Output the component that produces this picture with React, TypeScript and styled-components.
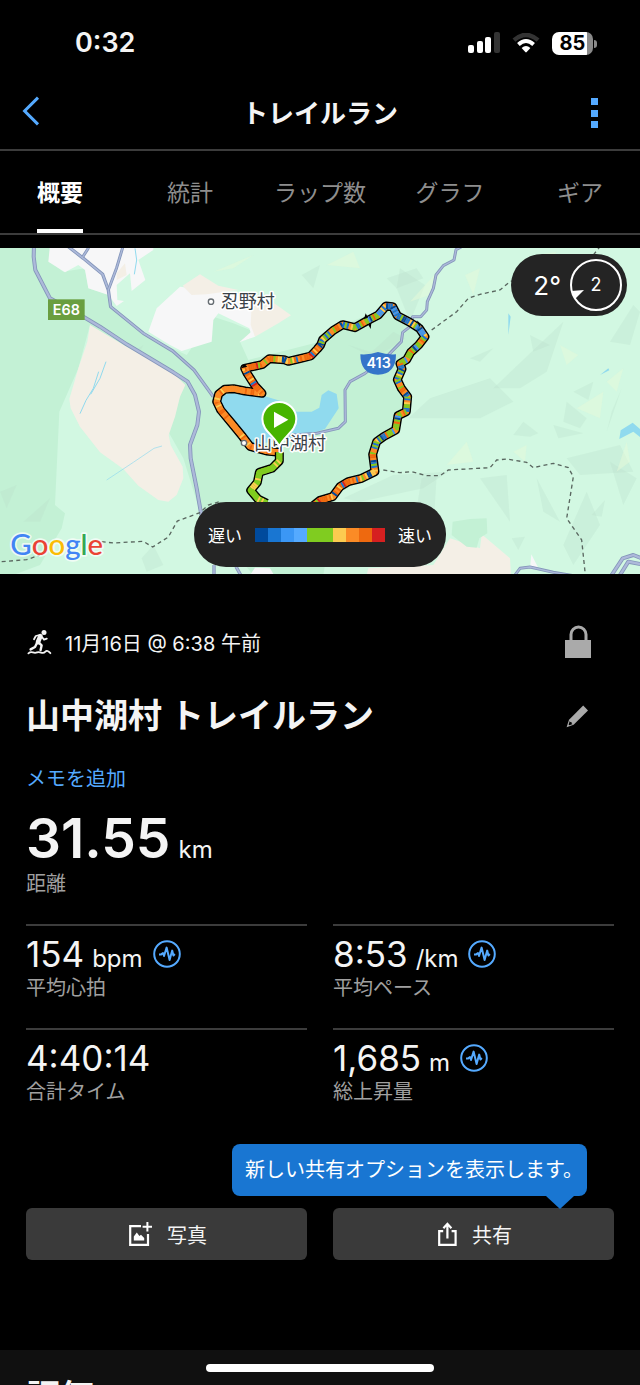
import React from "react";
import styled, { createGlobalStyle } from "styled-components";

const GlobalStyle = createGlobalStyle`
  *, *::before, *::after { box-sizing: border-box; }
  body {
    margin: 0;
    background: #000;
    color: #f4f4f4;
    font-family: Inter, "Noto Sans CJK JP", sans-serif;
  }
  h1, h2, p, dl, dd, dt { margin: 0; }
  button { border: 0; padding: 0; background: none; color: inherit; font: inherit; cursor: pointer; }
  svg { display: block; }
`;

const blue = "#55aaff";
const muted = "#a0a0a0";
const line = "#3c3c3c";

const Screen = styled.div`
  position: relative;
  display: flex;
  flex-direction: column;
  height: 100vh;
  overflow: hidden;
  background: #000;
`;

const StatusBar = styled.div`
  display: flex;
  flex: none;
  align-items: center;
  justify-content: space-between;
  height: 76px;
  padding: 10px 47px 0 75px;
`;

const Clock = styled.time`
  font-size: 27px;
  font-weight: 600;
  line-height: 32px;
`;

const StatusIcons = styled.div`
  display: flex;
  align-items: center;
  gap: 12px;
`;

const Battery = styled.div`
  position: relative;
  width: 41px;
  height: 23px;
  border-radius: 7px;
  background: linear-gradient(90deg, #fff 85%, #8a8a8a 85%);
  color: #000;
  font-size: 20px;
  font-weight: 700;
  line-height: 23px;
  text-align: center;

  &::after {
    content: "";
    position: absolute;
    top: 8px;
    right: -4px;
    width: 3px;
    height: 8px;
    border-radius: 0 3px 3px 0;
    background: #8a8a8a;
  }
`;

const NavBar = styled.header`
  display: grid;
  flex: none;
  grid-template-columns: 60px 1fr 60px;
  align-items: center;
  height: 75px;
  border-bottom: 2px solid ${line};
`;

const NavTitle = styled.h1`
  padding-top: 2px;
  font-size: 26px;
  font-weight: 700;
  line-height: 36px;
  text-align: center;
`;

const NavButton = styled.button<{ $end?: boolean }>`
  display: flex;
  justify-content: ${(p) => (p.$end ? "flex-end" : "flex-start")};
  padding: ${(p) => (p.$end ? "2px 42px 0 0" : "0 0 4px 22px")};
`;

const TabRow = styled.div`
  flex: none;
  overflow: hidden;
`;

const Tabs = styled.nav`
  display: grid;
  grid-template-columns: repeat(5, 1fr);
  height: 84px;
  margin: 0 -5px;
  border-bottom: 2px solid ${line};
`;

const Tab = styled.button<{ $active?: boolean }>`
  justify-self: center;
  height: 82px;
  padding-top: 5px;
  border-bottom: 4px solid ${(p) => (p.$active ? "#fff" : "transparent")};
  color: ${(p) => (p.$active ? "#fff" : "#8e8e8e")};
  font-size: 23px;
  font-weight: ${(p) => (p.$active ? 700 : 400)};
  line-height: 32px;
  white-space: nowrap;
`;

const MapPanel = styled.section`
  position: relative;
  flex: none;
  height: 326px;
  margin-top: 13px;
  background: #d2f8e2;
`;

const MapSvg = styled.svg`
  width: 100%;
  height: 100%;
`;

const Overlay = styled.div`
  position: absolute;
  display: flex;
  align-items: center;
  background: #242424;
  color: #fff;
`;

const Weather = styled(Overlay)`
  top: 6px;
  right: 13px;
  gap: 9px;
  height: 62px;
  padding: 0 5px 0 22px;
  border-radius: 31px;
  font-size: 26px;
`;

const Legend = styled(Overlay)`
  bottom: 7px;
  left: 50%;
  justify-content: center;
  gap: 13px;
  width: 252px;
  height: 65px;
  border-radius: 32px;
  font-size: 17px;
  transform: translateX(-50%);
`;

const Scale = styled.div`
  display: grid;
  grid-template-columns: repeat(10, 13px);
  height: 14px;
`;

const Swatch = styled.span<{ $color: string }>`
  background: ${(p) => p.$color};
`;

const Summary = styled.main`
  flex: none;
  padding: 49px 26px 90px;
`;

const Row = styled.div`
  display: flex;
  align-items: center;
  justify-content: space-between;
`;

const DateRow = styled(Row)`
  height: 38px;
  padding-right: 22px;
  font-size: 20px;
`;

const DateText = styled.div`
  display: flex;
  align-items: center;
  gap: 13px;
`;

const TitleRow = styled(Row)`
  height: 50px;
  margin-top: 30px;
  padding-right: 25px;
`;

const Title = styled.h2`
  font-size: 34px;
  font-weight: 700;
  line-height: 50px;
`;

const MemoButton = styled.button`
  display: block;
  margin-top: 23px;
  color: ${blue};
  font-size: 20px;
  line-height: 30px;
`;

const Metric = styled.dl`
  display: flex;
  flex-direction: column-reverse;
`;

const Distance = styled(Metric)`
  margin-top: 12px;
`;

const Label = styled.dt`
  color: ${muted};
  font-size: 20px;
  line-height: 28px;
`;

const Value = styled.dd<{ $large?: boolean }>`
  display: flex;
  align-items: baseline;
  gap: 8px;
  height: ${(p) => (p.$large ? 64 : 40)}px;
  font-size: ${(p) => (p.$large ? 55 : 35)}px;
  font-weight: ${(p) => (p.$large ? 600 : 400)};
  line-height: ${(p) => (p.$large ? 64 : 40)}px;

  svg { align-self: center; margin-left: 2px; }
`;

const Unit = styled.span`
  font-size: 24px;
  font-weight: 400;
  line-height: 24px;
`;

const MetricGrid = styled.div`
  display: grid;
  grid-template-columns: 1fr 1fr;
  gap: 0 26px;
  margin-top: 26px;

  ${Metric} {
    height: 104px;
    justify-content: flex-end;
    padding-top: 8px;
    border-top: 2px solid ${line};
  }
`;

const Actions = styled.div`
  position: relative;
  display: grid;
  grid-template-columns: 1fr 1fr;
  gap: 26px;
  margin-top: 76px;
`;

const ActionButton = styled.button`
  display: flex;
  align-items: center;
  justify-content: center;
  gap: 15px;
  height: 52px;
  padding-left: 3px;
  border-radius: 6px;
  background: #3a3a3a;
  font-size: 20px;
`;

const Tooltip = styled.div`
  position: absolute;
  right: 27px;
  bottom: 64px;
  padding: 0 4px 0 13px;
  border-radius: 8px;
  background: #1976d2;
  color: #fff;
  font-size: 20px;
  line-height: 52px;
  white-space: nowrap;

  &::after {
    content: "";
    position: absolute;
    top: 100%;
    right: 13px;
    border: 14px solid transparent;
    border-top: 13px solid #1976d2;
    border-bottom: 0;
  }
`;

const NextSection = styled.section`
  flex: 1 0 auto;
  padding: 22px 26px 0;
  background: #101010;
`;

const HomeIndicator = styled.div`
  position: absolute;
  bottom: 13px;
  left: 50%;
  width: 228px;
  height: 8px;
  border-radius: 4px;
  background: #fff;
  transform: translateX(-50%);
`;

const scaleColors = [
  "#004a9c", "#1976d2", "#3b97f5", "#55aaff", "#80cc20",
  "#80cc20", "#fccb50", "#fb8b26", "#ee690f", "#d62020",
];

type Point = [number, number];

const loop: Point[] = [
  [838, 622], [800, 618], [750, 604], [728, 575], [696, 536], [662, 495], [650, 470], [656, 447],
  [674, 433], [700, 431], [735, 438], [786, 445], [765, 422], [742, 386], [734, 370], [786, 359],
  [808, 341], [852, 344], [865, 349], [900, 341], [932, 333], [952, 312], [962, 300], [968, 284], [1000, 256],
  [1028, 239], [1065, 248], [1100, 228], [1135, 210], [1158, 183], [1178, 185], [1192, 212],
  [1228, 231], [1258, 250], [1275, 275], [1256, 300], [1232, 322], [1220, 344], [1200, 356],
  [1206, 372], [1192, 404], [1204, 430], [1223, 455], [1219, 500], [1194, 512], [1187, 555],
  [1152, 574], [1130, 590], [1118, 628], [1125, 680], [1085, 700], [1045, 710], [1020, 725],
  [998, 755], [960, 766], [930, 790],
];
const spur: Point[] = [
  [838, 622], [838, 648], [816, 670], [778, 682], [772, 712], [752, 736], [774, 762], [800, 775],
];

const palettes = {
  orange: ["#fb8b26", "#fb8b26", "#fb8b26", "#ee690f", "#fb8b26", "#fccb50", "#fb8b26"],
  mixed: ["#1976d2", "#fccb50", "#80cc20", "#fb8b26", "#004a9c", "#80cc20", "#3b97f5", "#ee690f", "#80cc20", "#fb8b26", "#1976d2"],
  cool: ["#004a9c", "#1976d2", "#80cc20", "#1976d2", "#fccb50", "#004a9c", "#3b97f5"],
  warm: ["#ee690f", "#fb8b26", "#ee690f", "#80cc20", "#fb8b26", "#fccb50", "#1976d2", "#fb8b26", "#ee690f", "#d62020", "#004a9c"],
  green: ["#80cc20", "#80cc20", "#80cc20", "#80cc20", "#80cc20", "#80cc20", "#fccb50"],
};

function paletteFor(index: number) {
  if (index < 11) return palettes.orange;
  if (index < 22) return palettes.warm;
  if (index > 27 && index < 34) return palettes.cool;
  if (index > 48) return palettes.warm;
  return palettes.mixed;
}

const toPath = (points: Point[]) => "M" + points.map((p) => p.join(" ")).join("L");

function Track({ points, green }: { points: Point[]; green?: boolean }) {
  const pieces: React.ReactNode[] = [];
  let n = 0;
  for (let i = 0; i < points.length - 1; i++) {
    const [x1, y1] = points[i];
    const [x2, y2] = points[i + 1];
    const count = Math.max(1, Math.round(Math.hypot(x2 - x1, y2 - y1) / 6));
    const palette = green ? palettes.green : paletteFor(i);
    for (let k = 0; k < count; k++) {
      const color = palette[(n * n * 3 + n * 5 + (n >> 2)) % palette.length];
      pieces.push(
        <line
          key={n}
          x1={x1 + ((x2 - x1) * k) / count}
          y1={y1 + ((y2 - y1) * k) / count}
          x2={x1 + ((x2 - x1) * (k + 1)) / count}
          y2={y1 + ((y2 - y1) * (k + 1)) / count}
          stroke={color}
          strokeWidth={18}
        />
      );
      n++;
    }
  }
  return (
    <g fill="none" strokeLinejoin="round">
      <path d={toPath(points)} stroke="#000" strokeWidth={27} />
      <path d={toPath(points)} stroke={green ? "#80cc20" : "#fb8b26"} strokeWidth={18} />
      {pieces}
    </g>
  );
}

const roads = [
  { w: 12, d: "M102 0L101 35L106 75L150 160L250 215L300 245L380 298L470 352L520 382L563 410L585 450L597 500L592 540L570 600L572 640L590 730L604 810" },
  { w: 10, d: "M205 5L250 40L308 88L325 135L332 185L430 265L518 318L582 375L640 455" },
  { w: 9, d: "M266 8L248 36M368 8L350 68L325 135" },
  { w: 9, d: "M1385 5L1368 14L1362 45L1330 62L1308 90L1300 130L1282 170L1280 195L1262 215L1238 215L1230 245L1208 262L1204 290L1160 335L1095 385L1050 410L1035 435L1036 530L1015 550L950 565L850 572" },
  { w: 9, d: "M1545 990L1560 970L1590 966L1660 982L1720 992" },
  { w: 12, d: "M1835 990L1868 940L1900 930L1925 940M1860 990L1885 950L1925 958" },
  { w: 10, d: "M642 960V990M708 965L722 990" },
];

const shade = [
  "1105 330L1180 260L1215 280L1140 330L1045 300", "1230 230L1275 120L1200 70L1190 130",
  "1290 460L1470 400L1540 470L1440 520L1225 520", "1480 430L1690 230L1640 380L1560 430",
  "1540 570L1570 530L1615 565L1590 575", "1660 540L1750 565L1675 580",
  "1720 440L1780 410L1765 465", "1700 470L1760 520L1740 550L1690 530",
  "1820 560L1865 430L1835 500", "1830 290L1900 180L1920 200L1890 300",
  "1180 690L1345 680L1270 730L1080 770L1030 760", "1440 700L1520 690L1530 830",
  "1610 700L1680 830L1630 800", "1700 640L1860 600L1900 680L1740 690",
  "1775 810L1815 765L1805 815", "1690 900L1760 740L1800 840L1720 960",
  "1830 650L1910 700L1870 780", "1535 880L1575 875L1555 915",
  "1410 340L1480 310L1440 350", "1160 100L1250 70L1270 100L1190 130",
  "905 90L960 60L940 130", "350 350L430 300L400 360", "425 940L460 900L490 960L440 980",
  "0 740L50 720L20 790", "70 830L150 760L120 830", "1265 700L1310 690L1300 850L1250 790",
  "1590 270L1650 300L1600 320", "1680 110L1780 70L1745 150",
];
const glow = [
  "1395 90L1440 70L1420 150", "1680 300L1735 330L1700 360", "1820 410L1870 370L1850 440",
  "1340 660L1400 590L1420 650", "1540 620L1580 600L1575 650", "1230 170L1330 60L1290 150",
  "1730 490L1810 440L1800 520", "1850 680L1880 590L1890 650", "1610 30L1670 20L1640 60",
  "980 60L1060 20L1080 70", "640 80L760 30L700 70",
];

function TrailMap() {
  return (
    <MapSvg viewBox="0 9 1920 978" preserveAspectRatio="xMidYMid slice" role="img" aria-label="ルートの地図">
      <rect x="-960" width="3840" height="990" fill="#d2f8e2" />
      <path
        fill="#c3f1d5"
        d="M0 0H150V50L190 80L255 70L265 130L330 150L335 190L430 270L560 330L640 215L700 235L750 255L752 280L720 290L745 345L960 290L1030 240L1165 185L1275 275L1200 370L1215 450L1185 555L1125 590L1120 680L1010 750L970 990H760L600 800L550 640L505 560L550 420L270 240L235 370L178 500L165 780L195 805L185 850L120 960L40 990H0Z"
      />
      <g fill="#b9dfc9" fillOpacity="0.3">{shade.map((d) => <path key={d} d={`M${d}Z`} />)}</g>
      <g fill="#e6f9da" fillOpacity="0.5">{glow.map((d) => <path key={d} d={`M${d}Z`} />)}</g>
      <g fill="#f7f7f8">
        <path d="M150 0H460V15L415 45L436 105L395 138L390 85L350 120L352 165L372 168L350 183L325 150L265 130L255 75L235 60L195 82L145 50Z" />
        <path d="M445 260L470 190L540 125L620 135L750 150L765 275L718 292L752 262L748 250L655 205L640 225L635 290L545 318L510 300Z" />
        <path d="M750 990L765 968L810 970L822 990ZM1590 970L1594 928L1618 975Z" />
      </g>
      <g fill="#f4efe6">
        <path d="M270 240L380 305L470 355L520 385L556 420L540 455L525 515L506 570L512 600L548 665L550 700L530 750L505 770L475 765L415 722L370 672L300 622L240 545L212 490L208 462L235 370L262 290Z" />
        <path d="M548 122L600 88L655 122L715 135L620 148L575 150Z" />
        <path d="M755 180L800 160L830 180L873 211L835 235L800 255L765 275L752 240Z" />
        <path d="M1100 990L1105 970L1300 960L1350 880L1440 910L1445 868L1530 940L1533 990ZM350 85L375 55L380 90L350 105Z" />
      </g>
      <path fill="#c3f1d5" d="M1355 870L1358 830L1410 822L1460 820L1462 865L1438 880L1430 908L1400 905Z" />
      <g fill="#90daee">
        <path d="M650 490L670 450L720 438L790 452L850 470L890 500L935 500L958 488L965 450L985 436L1010 447L1016 490L975 552L900 576L830 590L745 598L715 560Z" />
        <path d="M1858 582L1862 556L1898 533L1925 556V580L1900 560Z" />
        <path d="M1800 390L1825 370L1828 376ZM1525 205L1532 215L1525 270Z" />
      </g>
      <g fill="none" stroke="#90daee" strokeWidth="3">
        <path d="M240 506L258 466L280 430L296 380M272 448L300 400L318 350M405 10L410 45L403 88" />
        <path d="M320 705L400 652L462 610L486 603" strokeWidth="2" />
      </g>
      {roads.map((r) => (
        <g key={r.d} fill="none" strokeLinejoin="round">
          <path d={r.d} stroke="#8496ba" strokeWidth={r.w} />
          <path d={r.d} stroke="#adb9da" strokeWidth={r.w - 5} />
        </g>
      ))}
      <g fill="none" stroke="#59665f" strokeWidth="4" strokeDasharray="12 10">
        <path d="M5 950L80 944L120 930M305 890L340 894L430 889L458 906L505 876L532 828L600 803L625 780L665 768" />
        <path d="M1295 255L1370 200L1405 160L1440 148L1500 135L1530 110L1560 100L1600 70L1780 30L1800 5" />
        <path d="M1150 675L1200 683L1235 680L1280 692L1320 692L1345 675L1470 668L1490 645L1520 642L1580 652L1600 668L1660 655L1705 668L1720 695L1700 820L1745 885L1755 980" />
      </g>

      <Track points={loop} />
      <path d="M724 370L732 356L742 365ZM1092 222L1097 205L1104 218ZM1104 238L1112 252L1114 234ZM1250 226L1262 236L1258 245Z" />
      <Track points={spur} green />

      <path fill="#3474c9" d="M1081 328Q1110 330 1134 321Q1160 330 1188 328Q1188 388 1134 389Q1081 388 1081 328Z" />
      <g fontFamily='Inter, "Noto Sans CJK JP", sans-serif' fontWeight="600" fill="#fff" textAnchor="middle">
        <text x="1136" y="368" fontSize="43">413</text>
        <rect x="144" y="163" width="110" height="62" fill="#6a9e40" />
        <text x="199" y="210" fontSize="43">E68</text>
      </g>
      <g
        fontFamily='"Noto Sans CJK JP", sans-serif'
        fontSize="54"
        fill="#3b4248"
        stroke="#fff"
        strokeWidth="9"
        strokeLinejoin="round"
        paintOrder="stroke"
      >
        <text x="662" y="190">忍野村</text>
        <text x="762" y="616">山中湖村</text>
      </g>
      <g fill="#fff" stroke="#666d72" strokeWidth="4">
        <circle cx="633" cy="170" r="8" />
        <circle cx="732" cy="594" r="8" />
      </g>
      <path fill="#47b400" stroke="#fff" strokeWidth="6" d="M838 604C822 570 787 558 787 522A51 51 0 0 1 889 522C889 558 854 570 838 604Z" />
      <path fill="#fff" d="M822 500L865 524L822 549Z" />
      <text
        x="31" y="930" fontFamily="Lato, sans-serif" fontSize="88" fontWeight="500"
        stroke="#fff" strokeOpacity="0.7" strokeWidth="10" strokeLinejoin="round" paintOrder="stroke"
      >
        <tspan fill="#4285f4">G</tspan><tspan fill="#ea4335">o</tspan><tspan fill="#fbbc05">o</tspan>
        <tspan fill="#4285f4">g</tspan><tspan fill="#34a853">l</tspan><tspan fill="#ea4335">e</tspan>
      </text>
    </MapSvg>
  );
}

function SignalIcon() {
  return (
    <svg width="32" height="22" viewBox="0 0 32 22" fill="#fff" aria-hidden="true">
      <rect y="13" width="6" height="8" rx="2" />
      <rect x="9" y="9" width="6" height="12" rx="2" />
      <rect x="17" y="5" width="6" height="16" rx="2" />
      <rect x="26" width="6" height="21" rx="2" fill="#333" />
    </svg>
  );
}

function WifiIcon() {
  return (
    <svg width="28" height="20" viewBox="0 0 28 20" aria-hidden="true">
      <path d="M2 7.2Q14 -3.4 26 7.2" fill="none" stroke="#333" strokeWidth="4.4" />
      <path d="M6.4 11.4Q14 4.6 21.6 11.4" fill="none" stroke="#fff" strokeWidth="4" />
      <path d="M9.6 15Q14 11.2 18.4 15L14.7 19.1Q14 19.8 13.3 19.1Z" fill="#fff" />
    </svg>
  );
}

function RunnerIcon() {
  return (
    <svg width="26" height="26" viewBox="0 0 26 26" fill="none" stroke="#f4f4f4" strokeLinecap="round" strokeLinejoin="round" aria-hidden="true">
      <circle cx="18" cy="3.4" r="2.5" fill="#f4f4f4" stroke="none" />
      <path d="M14.4 7.2L12 13" strokeWidth="4.6" />
      <path d="M13.4 6L9.8 7L8 10.2M16 8L18 10.6L20.8 9.6" strokeWidth="1.8" />
      <path d="M12.6 13.4L15.6 16.4L14.6 21M11.2 13.4L9 18L4.6 20.4" strokeWidth="2.4" />
      <path d="M2.4 24.4Q4.4 22.6 6.8 23.4T11 23.4T15.2 23.6T19.4 22.6T24.4 24.2" strokeWidth="1.8" />
    </svg>
  );
}

function LockIcon() {
  return (
    <svg width="27" height="34" viewBox="0 0 27 34" aria-hidden="true">
      <path d="M6 16V9.5a7.5 7.5 0 0 1 15 0V16" fill="none" stroke="#aaa" strokeWidth="3" />
      <path d="M0 15H26V33H0Z" fill="#aaa" />
    </svg>
  );
}

function PencilIcon() {
  return (
    <svg width="23" height="23" viewBox="0 0 23 23" aria-hidden="true">
      <path d="M17.2 0.6L22 5.4L7.6 19.8L0.6 22.2L3 14.8Z" fill="#aaa" />
      <path d="M3.8 15.9L2.6 19.4L3.4 20.2L6.8 19L5.8 18.8L5.6 17.2L4.2 17Z" fill="#000" />
    </svg>
  );
}

function PulseIcon() {
  return (
    <svg width="28" height="28" viewBox="0 0 28 28" fill="none" stroke={blue} aria-hidden="true">
      <circle cx="14" cy="14" r="12.8" strokeWidth="2" />
      <path d="M6 14.4H8.2L10 13L11 16L13.6 7.6L16.6 20L19.2 10.6L20.4 15.6L21.8 14" strokeWidth="2" strokeLinejoin="round" />
    </svg>
  );
}

function PhotoIcon() {
  return (
    <svg width="23" height="24" viewBox="0 0 23 24" aria-hidden="true">
      <path d="M12 4.2H1.2V22.8H19V12" fill="none" stroke="#fff" strokeWidth="2.2" />
      <path d="M18.4 0V9.6M13.6 4.8H23" stroke="#fff" strokeWidth="2" />
      <path d="M4.8 18.6V14.6L7.8 10.4L10.4 14L12 12.8L15.2 16V18.6Z" fill="#fff" />
    </svg>
  );
}

function ShareIcon() {
  return (
    <svg width="19" height="24" viewBox="0 0 19 24" fill="none" stroke="#fff" strokeWidth="2.2" aria-hidden="true">
      <path d="M5.2 9.2H1.2V22.8H17.6V9.2H13.6" />
      <path d="M9.4 16.6V2M5.4 6.2L9.4 1.8L13.4 6.2" />
    </svg>
  );
}

const tabs = ["概要", "統計", "ラップ数", "グラフ", "ギア"];

const metrics = [
  { value: "154", unit: "bpm", label: "平均心拍", chart: true },
  { value: "8:53", unit: "/km", label: "平均ペース", chart: true },
  { value: "4:40:14", unit: "", label: "合計タイム", chart: false },
  { value: "1,685", unit: "m", label: "総上昇量", chart: true },
];

export default function App() {
  return (
    <>
      <GlobalStyle />
      <Screen>
        <StatusBar>
          <Clock>0:32</Clock>
          <StatusIcons>
            <SignalIcon />
            <WifiIcon />
            <Battery>85</Battery>
          </StatusIcons>
        </StatusBar>

        <NavBar>
          <NavButton aria-label="戻る">
            <svg width="18" height="30" viewBox="0 0 18 30" fill="none" stroke={blue} strokeWidth="3" aria-hidden="true">
              <path d="M16 1.6L2.6 15L16 28.4" />
            </svg>
          </NavButton>
          <NavTitle>トレイルラン</NavTitle>
          <NavButton $end aria-label="メニュー">
            <svg width="7" height="31" viewBox="0 0 7 31" fill={blue} aria-hidden="true">
              <path d="M0 0H7V7H0ZM0 12H7V19H0ZM0 23H7V30H0Z" />
            </svg>
          </NavButton>
        </NavBar>

        <TabRow>
          <Tabs>
            {tabs.map((name, i) => (
              <Tab key={name} $active={i === 0}>{name}</Tab>
            ))}
          </Tabs>
        </TabRow>

        <MapPanel>
          <TrailMap />
          <Weather>
            <span>2°</span>
            <svg width="52" height="52" viewBox="0 0 52 52" aria-hidden="true">
              <circle cx="26" cy="26" r="25" fill="none" stroke="#fff" strokeWidth="2" />
              <path d="M1 32L14 31L5 40Z" fill="#fff" />
              <text x="26" y="32" fontSize="18" fontFamily="Inter, sans-serif" fill="#fff" textAnchor="middle">2</text>
            </svg>
          </Weather>
          <Legend>
            <span>遅い</span>
            <Scale>
              {scaleColors.map((color, i) => <Swatch key={i} $color={color} />)}
            </Scale>
            <span>速い</span>
          </Legend>
        </MapPanel>

        <Summary>
          <DateRow>
            <DateText>
              <RunnerIcon />
              <time>11月16日 @ 6:38 午前</time>
            </DateText>
            <LockIcon />
          </DateRow>
          <TitleRow>
            <Title>山中湖村 トレイルラン</Title>
            <button aria-label="タイトルを編集"><PencilIcon /></button>
          </TitleRow>
          <MemoButton>メモを追加</MemoButton>
          <Distance>
            <Label>距離</Label>
            <Value $large>31.55<Unit>km</Unit></Value>
          </Distance>
          <MetricGrid>
            {metrics.map((m) => (
              <Metric key={m.label}>
                <Label>{m.label}</Label>
                <Value>
                  {m.value}
                  {m.unit && <Unit>{m.unit}</Unit>}
                  {m.chart && <PulseIcon />}
                </Value>
              </Metric>
            ))}
          </MetricGrid>
          <Actions>
            <ActionButton><PhotoIcon />写真</ActionButton>
            <ActionButton><ShareIcon />共有</ActionButton>
            <Tooltip role="tooltip">新しい共有オプションを表示します。</Tooltip>
          </Actions>
        </Summary>

        <NextSection>
          <Title>評価</Title>
        </NextSection>
        <HomeIndicator />
      </Screen>
    </>
  );
}
